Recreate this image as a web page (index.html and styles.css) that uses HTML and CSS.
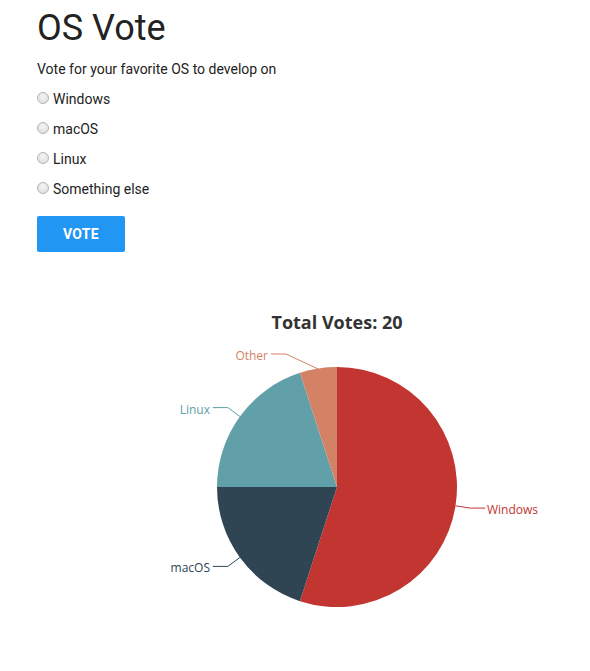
FILE: index.html
```html
<!DOCTYPE html>
<html>
<head>
<meta charset="utf-8">
<link rel="stylesheet" href="styles.css">
</head>
<body>
<div class="page">
  <h1 class="title">OS Vote</h1>
  <p class="lead">Vote for your favorite OS to develop on</p>
  <form class="vote-form">
    <label class="option"><input type="radio" name="os" class="radio">Windows</label>
    <label class="option"><input type="radio" name="os" class="radio">macOS</label>
    <label class="option"><input type="radio" name="os" class="radio">Linux</label>
    <label class="option"><input type="radio" name="os" class="radio">Something else</label>
    <button type="button" class="vote-btn">VOTE</button>
  </form>
  <svg class="chart" width="553" height="380" viewBox="0 0 553 380">
    <text class="chart-title" x="300" y="47" text-anchor="middle">Total Votes: 20</text>
    <path d="M300 205 L300 85 A120 120 0 1 1 262.92 319.13 Z" fill="#c23531"/>
    <path d="M300 205 L262.92 319.13 A120 120 0 0 1 180 205 Z" fill="#2f4554"/>
    <path d="M300 205 L180 205 A120 120 0 0 1 262.92 90.87 Z" fill="#61a0a8"/>
    <path d="M300 205 L262.92 90.87 A120 120 0 0 1 300 85 Z" fill="#d48265"/>
    <polyline class="lbl-line" points="418.5,223.8 433.3,226.1 448.3,226.1" stroke="#c23531"/>
    <polyline class="lbl-line" points="202.9,275.5 190.8,284.4 175.8,284.4" stroke="#2f4554"/>
    <polyline class="lbl-line" points="202.9,134.5 190.8,125.6 175.8,125.6" stroke="#61a0a8"/>
    <polyline class="lbl-line" points="281.2,87 249,72 234,72" stroke="#d48265"/>
    <text class="lbl" x="450" y="227" fill="#c23531">Windows</text>
    <text class="lbl" x="173" y="285.5" fill="#2f4554" text-anchor="end">macOS</text>
    <text class="lbl" x="173" y="127" fill="#61a0a8" text-anchor="end">Linux</text>
    <text class="lbl" x="231" y="73" fill="#d48265" text-anchor="end">Other</text>
  </svg>
</div>
</body>
</html>
```
FILE: styles.css
```css
html, body {
  margin: 0;
  padding: 0;
  background: #fff;
}
body {
  font-family: Roboto, "Liberation Sans", Arial, sans-serif;
  color: #222;
  overflow: hidden;
}
.page {
  padding-left: 37px;
}
.title {
  margin: 7px 0 0 0;
  font-size: 36px;
  line-height: 43px;
  font-weight: 400;
}
.lead {
  margin: 9px 0 5px 0;
  font-size: 14px;
  line-height: 20px;
}
.vote-form {
  display: flex;
  flex-direction: column;
  align-items: flex-start;
}
.option {
  display: flex;
  align-items: center;
  height: 30px;
  font-size: 14px;
}
.radio {
  appearance: none;
  -webkit-appearance: none;
  box-sizing: border-box;
  margin: 0 4px 2px 0;
  width: 12px;
  height: 12px;
  border-radius: 50%;
  border: 1px solid #b4b4b4;
  background: radial-gradient(circle at 50% 35%, #f4f4f4 0%, #e2e2e2 70%, #d6d6d6 100%);
}
.vote-btn {
  margin-top: 12px;
  width: 88px;
  height: 36px;
  border: 0;
  border-radius: 2px;
  background: #2196f3;
  color: #fff;
  font-family: Roboto, "Liberation Sans", Arial, sans-serif;
  font-weight: 700;
  font-size: 14px;
  letter-spacing: 0.3px;
  padding: 0;
}
.chart {
  display: block;
  margin-top: 30px;
}
.chart-title {
  font-family: "Open Sans", "Noto Sans", sans-serif;
  font-weight: 700;
  font-size: 18px;
  fill: #333;
}
.lbl {
  font-family: "Open Sans", "Noto Sans", sans-serif;
  font-size: 12px;
  dominant-baseline: central;
}
.lbl-line {
  fill: none;
  stroke-width: 1;
}
```
